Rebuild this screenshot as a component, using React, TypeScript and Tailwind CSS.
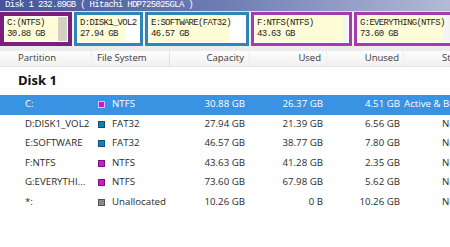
import React from "react";

type Part = {
  name: string;
  size: string;
  w: string;
  used: number;
  border: string;
  unused: string;
};

const parts: Part[] = [
  { name: "C:(NTFS)", size: "30.88 GB", w: "w-[72px]", used: 26.37 / 30.88, border: "border-[#7a1f7d] border-4", unused: "#d4d0c4" },
  { name: "D:DISK1_VOL2", size: "27.94 GB", w: "w-[69px]", used: 21.39 / 27.94, border: "border-[#2f86b5] border-[3px]", unused: "#ffffff" },
  { name: "E:SOFTWARE(FAT32)", size: "46.57 GB", w: "w-[104px]", used: 38.77 / 46.57, border: "border-[#2f86b5] border-[3px]", unused: "#ffffff" },
  { name: "F:NTFS(NTFS)", size: "43.63 GB", w: "w-[101px]", used: 41.28 / 43.63, border: "border-[#a63bb0] border-[3px]", unused: "#f4f4f4" },
  { name: "G:EVERYTHING(NTFS)", size: "73.60 GB", w: "w-[100px]", used: 67.98 / 73.6, border: "border-[#a63bb0] border-[3px]", unused: "#f4f4f4" },
];

type Row = {
  p: string;
  fs: string;
  sq: string;
  cap: string;
  used: string;
  unused: string;
  status: string;
  statusPad: string;
  sel?: boolean;
};

const rows: Row[] = [
  { p: "C:", fs: "NTFS", sq: "bg-[#c21fc4] border-[#e9b6ee]", cap: "30.88 GB", used: "26.37 GB", unused: "4.51 GB", status: "Active & Boot", statusPad: "pl-0", sel: true },
  { p: "D:DISK1_VOL2", fs: "FAT32", sq: "bg-[#1a7db4] border-[#0e4f78]", cap: "27.94 GB", used: "21.39 GB", unused: "6.56 GB", status: "None", statusPad: "pl-[38px]" },
  { p: "E:SOFTWARE", fs: "FAT32", sq: "bg-[#1a7db4] border-[#0e4f78]", cap: "46.57 GB", used: "38.77 GB", unused: "7.80 GB", status: "None", statusPad: "pl-[38px]" },
  { p: "F:NTFS", fs: "NTFS", sq: "bg-[#c21fc4] border-[#7a127c]", cap: "43.63 GB", used: "41.28 GB", unused: "2.35 GB", status: "None", statusPad: "pl-[38px]" },
  { p: "G:EVERYTHI...", fs: "NTFS", sq: "bg-[#c21fc4] border-[#7a127c]", cap: "73.60 GB", used: "67.98 GB", unused: "5.62 GB", status: "None", statusPad: "pl-[38px]" },
  { p: "*:", fs: "Unallocated", sq: "bg-[#8a8a8a] border-[#505050]", cap: "10.26 GB", used: "0 B", unused: "10.26 GB", status: "None", statusPad: "pl-[38px]" },
];

const mono = { fontFamily: "'Liberation Mono', 'DejaVu Sans Mono', monospace" };

export default function App() {
  return (
    <div className="w-[450px] h-[247px] overflow-hidden bg-white flex flex-col" style={{ fontFamily: "'Open Sans', 'Noto Sans', sans-serif" }}>
      {/* disk bar */}
      <div
        className="h-[11px] shrink-0 bg-gradient-to-r from-[#44559a] via-[#6f7db4] to-[#b4bad6] text-white text-[9px] leading-[11px] tracking-[-0.7px] pl-[5px] whitespace-pre"
        style={mono}
      >
        Disk 1 232.89GB ( Hitachi HDP725025GLA )
      </div>
      <div className="h-px bg-[#dfe2ee] shrink-0" />
      <div className="h-[34px] shrink-0 flex gap-[2px] bg-[#f2f2f2] overflow-hidden">
        {parts.map((pt) => (
          <div key={pt.name} className={`${pt.w} shrink-0 h-full ${pt.border}`}>
            <div
              className="w-full h-full border border-white flex flex-col justify-center pl-[2px] text-[#1e1e1e] text-[9px] leading-[11px] tracking-[-0.7px] whitespace-nowrap overflow-hidden"
              style={{
                ...mono,
                background: `linear-gradient(to right, #fffcd8 ${pt.used * 100}%, ${pt.unused} ${pt.used * 100}%)`,
              }}
            >
              <span>{pt.name}</span>
              <span>{pt.size}</span>
            </div>
          </div>
        ))}
      </div>
      <div className="h-[5px] shrink-0 bg-[#ececec]" />
      {/* header */}
      <div className="h-[16px] shrink-0 flex items-center bg-gradient-to-b from-[#fdfdfd] to-[#f1f1f1] border-b border-[#e4e4e4] text-[9.5px] text-[#3a3a3a] whitespace-nowrap overflow-hidden">
        <div className="w-[92px] shrink-0 pl-[18px] h-full flex items-center border-r border-[#ececec]">Partition</div>
        <div className="w-[78px] shrink-0 pl-[5px] h-full flex items-center border-r border-[#e2e2e2]">File System</div>
        <div className="w-[80px] shrink-0 pr-[5px] h-full flex items-center justify-end border-r border-[#ececec]">Capacity</div>
        <div className="w-[77px] shrink-0 pr-[5px] h-full flex items-center justify-end border-r border-[#ececec]">Used</div>
        <div className="w-[77px] shrink-0 pr-[4px] h-full flex items-center justify-end border-r border-[#ececec]">Unused</div>
        <div className="shrink-0 pl-[38px] h-full flex items-center">Status</div>
      </div>
      {/* disk title */}
      <div className="h-[28px] shrink-0 flex items-center pl-[18px] text-[13px] font-bold text-[#111]">Disk 1</div>
      {/* rows */}
      {rows.map((r) => (
        <div
          key={r.p}
          className={`h-[19.5px] shrink-0 flex items-center text-[9.7px] whitespace-nowrap overflow-hidden ${r.sel ? "bg-[#3a92e3] text-white" : "text-[#2a2a2a]"}`}
        >
          <div className="w-[92px] shrink-0 pl-[25px]">{r.p}</div>
          <div className="w-[78px] shrink-0 pl-[6px] flex items-center gap-[7px]">
            <span className={`w-[7px] h-[7px] border ${r.sq}`} />
            <span>{r.fs}</span>
          </div>
          <div className="w-[80px] shrink-0 pr-[5px] text-right">{r.cap}</div>
          <div className="w-[77px] shrink-0 pr-[4px] text-right">{r.used}</div>
          <div className="w-[77px] shrink-0 pr-[4px] text-right">{r.unused}</div>
          <div className={`shrink-0 ${r.statusPad}`}>{r.status}</div>
        </div>
      ))}
      <div className="flex-1" />
    </div>
  );
}
